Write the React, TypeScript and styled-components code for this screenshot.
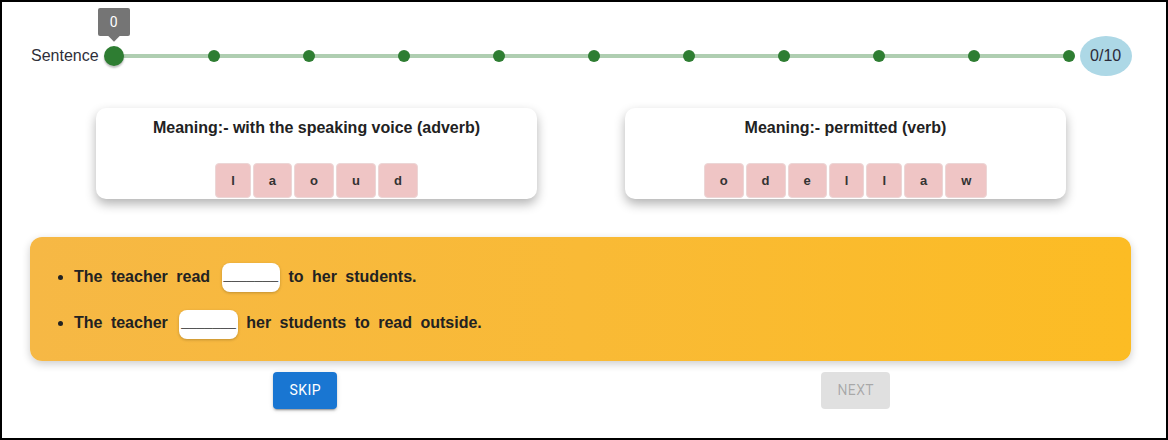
import React from "react";
import styled, { createGlobalStyle } from "styled-components";

const GlobalStyle = createGlobalStyle`
  html, body { margin: 0; padding: 0; background: #fff; }
  body { font-family: "Liberation Sans", Arial, sans-serif; }
`;

const Frame = styled.div`
  box-sizing: border-box;
  width: 1168px;
  height: 440px;
  border: 2px solid #000;
  background: #fff;
  overflow: hidden;
`;

const SliderRow = styled.div`
  display: flex;
  align-items: center;
  height: 40px;
  margin-top: 34px;
  padding-left: 29px;
`;

const SliderLabel = styled.span`
  font-size: 16px;
  color: #2f2f3a;
`;

const Slider = styled.div`
  position: relative;
  width: 955px;
  height: 20px;
  margin-left: 15px;
`;

const Rail = styled.div`
  position: absolute;
  left: 0;
  right: 0;
  top: 8px;
  height: 4px;
  border-radius: 2px;
  background: rgba(46, 125, 50, 0.38);
`;

const Mark = styled.span`
  position: absolute;
  top: 50%;
  width: 12px;
  height: 12px;
  border-radius: 50%;
  background: #2e7d32;
  transform: translate(-50%, -50%);
`;

const Thumb = styled.span`
  position: absolute;
  top: 50%;
  left: 0;
  width: 20px;
  height: 20px;
  border-radius: 50%;
  background: #2e7d32;
  transform: translate(-50%, -50%);
  box-shadow: 0 2px 2px rgba(0, 0, 0, 0.25);
`;

const ValueLabel = styled.span`
  position: absolute;
  left: 50%;
  bottom: 30px;
  transform: translateX(-50%);
  width: 32px;
  height: 28px;
  box-sizing: border-box;
  border-radius: 2px;
  background: #757575;
  color: #fff;
  font-family: Roboto, "Liberation Sans", sans-serif;
  font-size: 14px;
  display: flex;
  align-items: center;
  justify-content: center;
  &::after {
    content: "";
    position: absolute;
    left: 50%;
    bottom: -4px;
    width: 8px;
    height: 8px;
    background: #757575;
    transform: translateX(-50%) rotate(45deg);
  }
`;

const Counter = styled.div`
  margin-left: 11px;
  width: 52px;
  height: 40px;
  border-radius: 50%;
  background: #add8e6;
  color: #2b2b3a;
  font-size: 16px;
  display: flex;
  align-items: center;
  justify-content: center;
`;

const CardRow = styled.div`
  display: flex;
  gap: 88px;
  margin-top: 32px;
  padding-left: 94px;
`;

const Card = styled.div`
  width: 441px;
  height: 91px;
  box-sizing: border-box;
  background: #fff;
  border-radius: 10px;
  box-shadow: 0 5px 11px rgba(0, 0, 0, 0.3);
  display: flex;
  flex-direction: column;
  align-items: center;
  padding-bottom: 1px;
`;

const CardTitle = styled.div`
  margin-top: 10px;
  line-height: 20px;
  font-size: 16px;
  font-weight: 700;
  color: #222;
`;

const Tiles = styled.div`
  margin-top: auto;
  display: flex;
  gap: 2px;
`;

const Tile = styled.span`
  box-sizing: border-box;
  height: 35px;
  padding: 0 15px;
  border: 1px solid #ecd6d6;
  border-radius: 4px;
  background: #efc5c5;
  color: #333;
  font-size: 13px;
  font-weight: 700;
  display: flex;
  align-items: center;
  justify-content: center;
`;

const SentenceBox = styled.div`
  margin: 38px 35px 0 28px;
  padding: 25px 0 22px 4px;
  border-radius: 12px;
  background: linear-gradient(90deg, #f6b845 0%, #f9ba36 50%, #fcbc24 100%);
  box-shadow: 0 3px 8px rgba(0, 0, 0, 0.2);
`;

const SentenceList = styled.ul`
  margin: 0;
  padding-left: 40px;
`;

const Sentence = styled.li`
  line-height: 29px;
  font-size: 16px;
  font-weight: 700;
  color: #222;
  word-spacing: 4px;
  & + & {
    margin-top: 16px;
  }
`;

const Blank = styled.span`
  display: inline-block;
  vertical-align: middle;
  box-sizing: border-box;
  height: 29px;
  margin-left: 3px;
  padding: 0 2px;
  border-radius: 8px;
  background: #fff;
  box-shadow: 0 1px 3px rgba(0, 0, 0, 0.22);
  color: #555;
  font-size: 14px;
  font-weight: 400;
  line-height: 22px;
  word-spacing: 0;
`;

const ButtonRow = styled.div`
  margin: 11px 35px 0 28px;
  display: grid;
  grid-template-columns: 1fr 1fr;
  justify-items: center;
`;

const Button = styled.button<{ $disabled?: boolean }>`
  box-sizing: border-box;
  min-width: 64px;
  height: 37px;
  padding: 6px 16px;
  border: none;
  border-radius: 4px;
  font-family: Roboto, "Liberation Sans", sans-serif;
  font-size: 14px;
  font-weight: 400;
  letter-spacing: 0.4px;
  text-transform: uppercase;
  background: ${(p) => (p.$disabled ? "rgba(0,0,0,0.12)" : "#1976d2")};
  color: ${(p) => (p.$disabled ? "rgba(0,0,0,0.26)" : "#fff")};
  box-shadow: ${(p) =>
    p.$disabled
      ? "none"
      : "0 3px 1px -2px rgba(0,0,0,0.2), 0 2px 2px 0 rgba(0,0,0,0.14), 0 1px 5px 0 rgba(0,0,0,0.12)"};
  cursor: ${(p) => (p.$disabled ? "default" : "pointer")};
`;

const words = [
  { meaning: "with the speaking voice (adverb)", letters: ["l", "a", "o", "u", "d"] },
  { meaning: "permitted (verb)", letters: ["o", "d", "e", "l", "l", "a", "w"] },
];

const BLANK = "_______";
const TRACK = 955;

export default function App() {
  const marks = Array.from({ length: 10 }, (_, i) => 100 + 95 * i);
  return (
    <>
      <GlobalStyle />
      <Frame>
        <SliderRow>
          <SliderLabel>Sentence</SliderLabel>
          <Slider>
            <Rail />
            {marks.map((px) => (
              <Mark key={px} style={{ left: `${(px / TRACK) * 100}%` }} />
            ))}
            <Thumb>
              <ValueLabel>0</ValueLabel>
            </Thumb>
          </Slider>
          <Counter>0/10</Counter>
        </SliderRow>

        <CardRow>
          {words.map((w) => (
            <Card key={w.meaning}>
              <CardTitle>Meaning:- {w.meaning}</CardTitle>
              <Tiles>
                {w.letters.map((l, i) => (
                  <Tile key={i}>{l}</Tile>
                ))}
              </Tiles>
            </Card>
          ))}
        </CardRow>

        <SentenceBox>
          <SentenceList>
            <Sentence>
              The teacher read <Blank>{BLANK}</Blank> to her students.
            </Sentence>
            <Sentence>
              The teacher <Blank>{BLANK}</Blank> her students to read outside.
            </Sentence>
          </SentenceList>
        </SentenceBox>

        <ButtonRow>
          <Button>Skip</Button>
          <Button $disabled disabled>
            Next
          </Button>
        </ButtonRow>
      </Frame>
    </>
  );
}
